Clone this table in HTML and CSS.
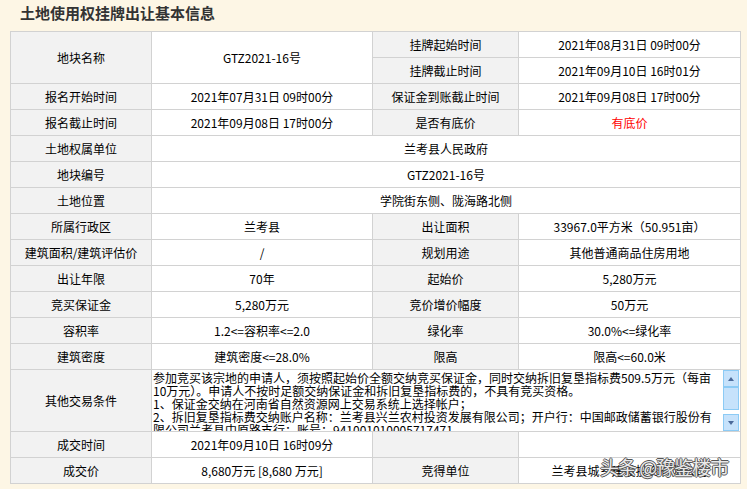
FILE: index.html
```html
<!DOCTYPE html>
<html lang="zh">
<head>
<meta charset="utf-8">
<link rel="stylesheet" href="styles.css">
</head>
<body>
<div class="page">
  <h1 class="title">土地使用权挂牌出让基本信息</h1>
  <table class="info">
    <colgroup>
      <col class="c1"><col class="c2"><col class="c3"><col class="c4">
    </colgroup>
    <tr>
      <td class="lbl" rowspan="2">地块名称</td>
      <td class="val" rowspan="2">GTZ2021-16号</td>
      <td class="lbl">挂牌起始时间</td>
      <td class="val">2021年08月31日 09时00分</td>
    </tr>
    <tr>
      <td class="lbl">挂牌截止时间</td>
      <td class="val">2021年09月10日 16时01分</td>
    </tr>
    <tr>
      <td class="lbl">报名开始时间</td>
      <td class="val">2021年07月31日 09时00分</td>
      <td class="lbl">保证金到账截止时间</td>
      <td class="val">2021年09月08日 17时00分</td>
    </tr>
    <tr>
      <td class="lbl">报名截止时间</td>
      <td class="val">2021年09月08日 17时00分</td>
      <td class="lbl">是否有底价</td>
      <td class="val red">有底价</td>
    </tr>
    <tr>
      <td class="lbl">土地权属单位</td>
      <td class="val" colspan="3">兰考县人民政府</td>
    </tr>
    <tr>
      <td class="lbl">地块编号</td>
      <td class="val" colspan="3">GTZ2021-16号</td>
    </tr>
    <tr>
      <td class="lbl">土地位置</td>
      <td class="val" colspan="3">学院街东侧、陇海路北侧</td>
    </tr>
    <tr>
      <td class="lbl">所属行政区</td>
      <td class="val">兰考县</td>
      <td class="lbl">出让面积</td>
      <td class="val">33967.0平方米（50.951亩）</td>
    </tr>
    <tr>
      <td class="lbl">建筑面积/建筑评估价</td>
      <td class="val">/</td>
      <td class="lbl">规划用途</td>
      <td class="val">其他普通商品住房用地</td>
    </tr>
    <tr>
      <td class="lbl">出让年限</td>
      <td class="val">70年</td>
      <td class="lbl">起始价</td>
      <td class="val">5,280万元</td>
    </tr>
    <tr>
      <td class="lbl">竞买保证金</td>
      <td class="val">5,280万元</td>
      <td class="lbl">竞价增价幅度</td>
      <td class="val">50万元</td>
    </tr>
    <tr>
      <td class="lbl">容积率</td>
      <td class="val">1.2&lt;=容积率&lt;=2.0</td>
      <td class="lbl">绿化率</td>
      <td class="val">30.0%&lt;=绿化率</td>
    </tr>
    <tr>
      <td class="lbl">建筑密度</td>
      <td class="val">建筑密度&lt;=28.0%</td>
      <td class="lbl">限高</td>
      <td class="val">限高&lt;=60.0米</td>
    </tr>
    <tr class="tall">
      <td class="lbl">其他交易条件</td>
      <td class="val box-cell" colspan="3">
        <div class="memo">
          <div class="memo-text">
            <div class="line">参加竞买该宗地的申请人，须按照起始价全额交纳竞买保证金，同时交纳拆旧复垦指标费509.5万元（每亩</div>
            <div class="line">10万元）。申请人不按时足额交纳保证金和拆旧复垦指标费的，不具有竞买资格。</div>
            <div class="line">1、保证金交纳在河南省自然资源网上交易系统上选择帐户；</div>
            <div class="line">2、拆旧复垦指标费交纳账户名称：兰考县兴兰农村投资发展有限公司；开户行：中国邮政储蓄银行股份有</div>
            <div class="line">限公司兰考县中原路支行；账号：941001010005717471</div>
          </div>
          <div class="scrollbar">
            <div class="sb-btn"><span class="arrow up"></span></div>
            <div class="sb-thumb"></div>
            <div class="sb-track"></div>
            <div class="sb-btn"><span class="arrow down"></span></div>
          </div>
        </div>
      </td>
    </tr>
    <tr>
      <td class="lbl">成交时间</td>
      <td class="val">2021年09月10日 16时09分</td>
      <td class="lbl"></td>
      <td class="val"></td>
    </tr>
    <tr>
      <td class="lbl">成交价</td>
      <td class="val">8,680万元 [8,680 万元]</td>
      <td class="lbl">竞得单位</td>
      <td class="val">兰考县城乡建设投资有限公司</td>
    </tr>
  </table>
  <div class="watermark">头条 @豫鉴楼市</div>
</div>
</body>
</html>
```

FILE: styles.css
```css
html, body {
  margin: 0;
  padding: 0;
  background: #fdf6e5;
}
body {
  font-family: "Noto Sans CJK SC", "Noto Sans", sans-serif;
  font-size: 12px;
  color: #000;
}
.page {
  position: relative;
  width: 747px;
  height: 489px;
  overflow: hidden;
}
.title {
  margin: 0;
  padding: 0 0 0 20px;
  height: 31px;
  line-height: 26px;
  font-size: 15px;
  font-weight: bold;
  color: #333;
}
.info {
  margin-left: 10px;
  border-collapse: collapse;
  table-layout: fixed;
  width: 730px;
  border: 1px solid #cfcfcf;
}
.c1 { width: 141px; }
.c2 { width: 221px; }
.c3 { width: 146px; }
.c4 { width: 222px; }
.info td {
  border: 1px solid #d2d2d2;
  height: 25px;
  padding: 0;
  text-align: center;
  line-height: 14px;
  white-space: nowrap;
  overflow: hidden;
}
.lbl {
  background: #f2f2f2;
}
.val {
  background: #fff;
}
.red {
  color: #f00;
}
.tall td {
  height: 61px;
}
.info td.box-cell {
  text-align: left;
  vertical-align: top;
}
.memo {
  display: flex;
  height: 61px;
  overflow: hidden;
}
.memo-text {
  flex: 1;
  padding: 1px 0 0 1px;
  overflow: hidden;
}
.line {
  height: 13px;
  line-height: 13px;
  white-space: nowrap;
}
.scrollbar {
  width: 16px;
  margin-right: 1px;
  display: flex;
  flex-direction: column;
  background: #fff;
}
.sb-btn {
  background: #c6e2fb;
  border: 1px solid #8ccbf5;
  display: flex;
  align-items: center;
  justify-content: center;
  box-sizing: border-box;
  height: 17px;
}
.sb-thumb {
  height: 23px;
  background: #c6e2fb;
  border: 1px solid #8ccbf5;
  box-sizing: border-box;
}
.sb-track {
  flex: 1;
  background: #fff;
}
.arrow {
  width: 0;
  height: 0;
  border-left: 3.5px solid transparent;
  border-right: 3.5px solid transparent;
}
.arrow.up {
  border-bottom: 4px solid #4b6a9a;
}
.arrow.down {
  border-top: 4px solid #4b6a9a;
}
.watermark {
  position: absolute;
  left: 600px;
  top: 454px;
  font-size: 19px;
  line-height: 26px;
  color: rgba(255, 255, 255, 0.9);
  text-shadow: 1px 0 0 #555, -1px 0 0 #555, 0 1px 0 #555, 0 -1px 0 #555;
  white-space: nowrap;
  letter-spacing: -1px;
}
```
